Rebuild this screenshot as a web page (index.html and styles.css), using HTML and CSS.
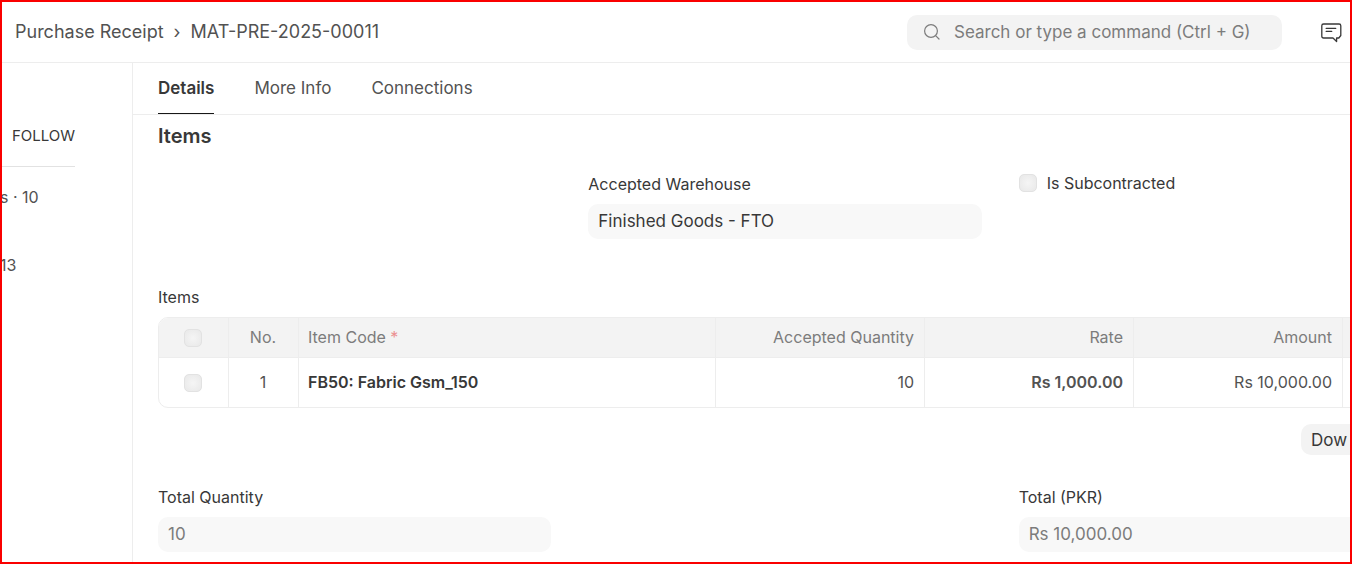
FILE: index.html
```
<!DOCTYPE html>
<html lang="en">
<head>
    <meta charset="UTF-8">
    <meta name="viewport" content="width=device-width, initial-scale=1.0">
    <title>MAT-PRE-2025-00011</title>
    <link rel="stylesheet" href="styles.css">
</head>
<body>

<header class="navbar">
    <nav class="breadcrumb">
        <a href="#">Purchase Receipt</a>
        <span class="separator">›</span>
        <a href="#">MAT-PRE-2025-00011</a>
    </nav>
    <label class="search">
        <svg width="18" height="18" viewBox="0 0 18 18" fill="none" stroke="#7c7c7c" stroke-width="1.2" stroke-linecap="round">
            <circle cx="8" cy="8" r="6.4"/>
            <path d="M12.600 12.600l3.400 3.400"/>
        </svg>
        <input type="text" placeholder="Search or type a command (Ctrl + G)" aria-label="Search">
    </label>
    <button class="chat" type="button" aria-label="Messages">
        <svg width="22" height="22" viewBox="0 0 22 22" fill="none" stroke="#383838" stroke-width="1.3" stroke-linecap="round" stroke-linejoin="round">
            <path d="M3.600 3h15.400q1.800 0 1.800 1.800v9.700l-2 2.500h-2.200v3.500l-3.600-3.500H3.600q-1.800 0-1.800-1.800V4.800Q1.800 3 3.600 3z"/>
            <path d="M6.200 7.400h9.500M6.200 10.400h5.500"/>
        </svg>
    </button>
</header>

<div class="page">
    <aside class="sidebar">
        <button class="follow" type="button">FOLLOW</button>
        <div class="stat">s · 10</div>
        <div class="stat">13</div>
    </aside>

    <main class="content">
        <nav class="tabs">
            <a class="tab active" href="#">Details</a>
            <a class="tab" href="#">More Info</a>
            <a class="tab" href="#">Connections</a>
        </nav>

        <div class="form">
            <h2>Items</h2>

            <div class="row">
                <div class="field warehouse">
                    <label for="warehouse">Accepted Warehouse</label>
                    <input type="text" id="warehouse" value="Finished Goods - FTO">
                </div>
                <label class="check-field">
                    <input type="checkbox">
                    Is Subcontracted
                </label>
            </div>

            <div class="table-label">Items</div>
            <table class="grid">
                <colgroup>
                    <col class="col-small">
                    <col class="col-small">
                    <col class="col-item">
                    <col class="col-number">
                    <col class="col-number">
                    <col class="col-number">
                    <col>
                </colgroup>
                <thead>
                    <tr>
                        <th class="center"><input type="checkbox" aria-label="Select all"></th>
                        <th class="center">No.</th>
                        <th>Item Code <span class="required">*</span></th>
                        <th class="number">Accepted Quantity</th>
                        <th class="number">Rate</th>
                        <th class="number">Amount</th>
                        <th></th>
                    </tr>
                </thead>
                <tbody>
                    <tr>
                        <td class="center"><input type="checkbox" aria-label="Select row 1"></td>
                        <td class="center">1</td>
                        <td class="item-code">FB50: Fabric Gsm_150</td>
                        <td class="number">10</td>
                        <td class="number bold">Rs 1,000.00</td>
                        <td class="number">Rs 10,000.00</td>
                        <td></td>
                    </tr>
                </tbody>
            </table>

            <div class="grid-footer">
                <button class="download" type="button">Dow</button>
            </div>

            <div class="row totals">
                <div class="field">
                    <label for="totalQty">Total Quantity</label>
                    <input type="text" id="totalQty" value="10" readonly>
                </div>
                <div class="field total">
                    <label for="total">Total (PKR)</label>
                    <input type="text" id="total" value="Rs 10,000.00" readonly>
                </div>
            </div>
        </div>
    </main>
</div>

</body>
</html>
```

FILE: styles.css
```
* {
    box-sizing: border-box;
}

body {
    font-family: Inter, sans-serif;
    font-size: 16px;
    line-height: 24px;
    color: #383838;
    background-color: #ffffff;
    margin: 0;
    height: 100vh;
    border: 2px solid #fa0000;
    display: flex;
    flex-direction: column;
    overflow: hidden;
}

a {
    color: inherit;
    text-decoration: none;
}

input, button {
    font: inherit;
    color: inherit;
    border: none;
    margin: 0;
}

.navbar {
    display: flex;
    align-items: center;
    flex: none;
    height: 61px;
    padding: 0 8px 0 13px;
    border-bottom: 1px solid #ededed;
}

.breadcrumb {
    display: flex;
    gap: 10px;
    font-size: 18px;
    color: #525252;
}

.search {
    display: flex;
    align-items: center;
    gap: 13px;
    width: 375px;
    height: 35px;
    margin-left: auto;
    padding: 0 16px;
    border-radius: 10px;
    background-color: #f3f3f3;
}

.search input {
    flex: 1;
    min-width: 0;
    padding: 0;
    font-size: 17px;
    background: none;
}

.search input::placeholder {
    color: #7c7c7c;
}

.chat {
    display: flex;
    margin-left: 38px;
    padding: 0;
    background: none;
}

.page {
    display: flex;
    flex: 1;
    min-height: 0;
}

.sidebar {
    flex: none;
    width: 131px;
    border-right: 1px solid #ededed;
    color: #525252;
}

.follow {
    display: block;
    width: 73px;
    height: 104px;
    padding: 42px 0 0;
    border-bottom: 1px solid #e2e2e2;
    background: none;
    color: #383838;
    font-size: 15px;
    text-align: right;
}

.stat {
    padding-top: 18px;
    margin: 0 0 26px -2px;
}

.content {
    flex: 1;
    min-width: 0;
}

.tabs {
    display: flex;
    gap: 40px;
    height: 52px;
    padding: 0 25px;
    border-bottom: 1px solid #ededed;
    font-size: 17px;
    color: #525252;
}

.tab {
    padding-top: 13px;
}

.tab.active {
    color: #383838;
    font-weight: 600;
    border-bottom: 1px solid #171717;
}

/* the form runs on past the right edge of the window */
.form {
    margin-right: -62px;
    padding: 9px 0 0 25px;
}

h2 {
    margin: 0 0 24px;
    font-size: 20px;
    line-height: 24px;
    font-weight: 600;
}

.row {
    display: grid;
    grid-template-columns: repeat(3, 1fr);
    gap: 37px;
}

.warehouse {
    grid-column: 2;
}

.total {
    grid-column: 3;
}

.field label {
    display: block;
    margin-bottom: 8px;
}

.field input {
    display: block;
    width: 100%;
    height: 35px;
    padding: 0 10px 2px;
    border-radius: 10px;
    background-color: #f8f8f8;
    font-size: 17px;
}

.field input:read-only {
    color: #7c7c7c;
}

.check-field {
    display: flex;
    align-items: center;
    gap: 10px;
    height: 22px;
}

input[type="checkbox"] {
    appearance: none;
    width: 18px;
    height: 18px;
    border: 1px solid #e2e2e2;
    border-radius: 5px;
    background: radial-gradient(#f5f5f5, #e8e8e8);
    vertical-align: middle;
}

.table-label {
    margin: 46px 0 8px;
}

.grid {
    width: 100%;
    table-layout: fixed;
    border: 1px solid #ededed;
    border-radius: 10px;
    border-collapse: separate;
    border-spacing: 0;
    overflow: hidden;
    color: #525252;
}

.col-small {
    width: 70px;
}

.col-item {
    width: 417px;
}

.col-number {
    width: 209px;
}

.grid th, .grid td {
    padding: 0 10px 2px 9px;
    border-right: 1px solid #ededed;
    text-align: left;
}

.grid th {
    height: 40px;
    border-bottom: 1px solid #ededed;
    background-color: #f3f3f3;
    color: #7c7c7c;
    font-weight: 400;
}

.grid td {
    height: 49px;
}

.grid .center {
    text-align: center;
}

.grid .number {
    text-align: right;
}

.grid .item-code {
    color: #383838;
    font-weight: 600;
}

.grid .bold {
    font-weight: 600;
}

.required {
    color: #eb9091;
}

.grid-footer {
    display: flex;
    justify-content: flex-end;
    padding: 16px 0 30px;
}

.download {
    width: 111px;
    height: 31px;
    padding: 0 10px;
    border-radius: 10px;
    background-color: #f3f3f3;
    font-size: 17px;
    text-align: left;
}
```
